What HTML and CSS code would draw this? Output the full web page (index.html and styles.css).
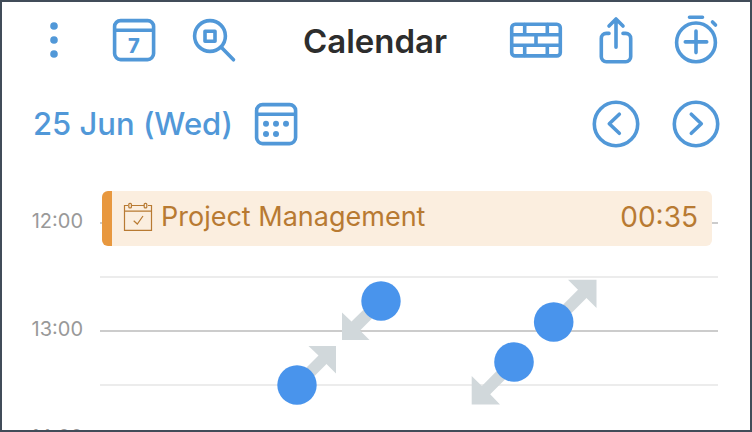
FILE: index.html
```html
<!doctype html>
<html lang="en">
  <head>
    <meta charset="UTF-8" />
    <meta name="viewport" content="width=device-width, initial-scale=1.0" />
    <title>Calendar</title>
    <link rel="stylesheet" href="styles.css">
  </head>
  <body>
    <div class="wrapper">
      <header class="toolbar">
        <div class="toolbar_group">
          <button class="icon_button" aria-label="Menu">
            <svg viewBox="0 0 56 56" class="icon">
              <g class="icon_fill">
                <circle cx="28" cy="13" r="3.8" />
                <circle cx="28" cy="27" r="3.8" />
                <circle cx="28" cy="41" r="3.8" />
              </g>
            </svg>
          </button>
          <button class="icon_button" aria-label="Week view">
            <svg viewBox="0 0 56 56" class="icon">
              <rect x="8.6" y="7.6" width="39" height="39" rx="6" />
              <path d="M9 17.2H47" />
              <text x="28" y="39.5" class="icon_text">7</text>
            </svg>
          </button>
          <button class="icon_button" aria-label="Zoom">
            <svg viewBox="0 0 56 56" class="icon">
              <circle cx="24" cy="23" r="15.4" />
              <rect x="19" y="18.2" width="10" height="10" />
              <path d="M35.5 34.5L47.5 46.8" />
            </svg>
          </button>
        </div>
        <h1>Calendar</h1>
        <div class="toolbar_group toolbar_group_right">
          <button class="icon_button" aria-label="Blocks">
            <svg viewBox="0 0 56 56" class="icon">
              <rect x="3.7" y="11.3" width="48.6" height="31.6" rx="3.5" />
              <path d="M4 21.7H52M4 32.2H52M16.7 11.5V21.7M39.3 11.5V21.7M28 21.7V32.2M16.7 32.2V42.5M39.3 32.2V42.5" />
            </svg>
          </button>
          <button class="icon_button" aria-label="Share">
            <svg viewBox="0 0 56 56" class="icon">
              <path d="M28 6V34.3M21 13L28 6L35 13" />
              <path d="M21 20.4H18.3a5 5 0 0 0-5 5V43.7a5 5 0 0 0 5 5H37.7a5 5 0 0 0 5-5V25.4a5 5 0 0 0-5-5H35" />
            </svg>
          </button>
          <button class="icon_button" aria-label="Add timer">
            <svg viewBox="0 0 56 56" class="icon">
              <circle cx="28" cy="29.4" r="19.4" />
              <path d="M17.3 28.9H38.7M28 18V39.6M21.5 4.3H34.5M44.5 9L47.5 12" />
            </svg>
          </button>
        </div>
      </header>

      <div class="date_bar">
        <h2>25 Jun (Wed)</h2>
        <button class="icon_button" aria-label="Pick a date">
          <svg viewBox="0 0 56 56" class="icon">
            <rect x="8.6" y="8.6" width="39" height="39" rx="6" />
            <path d="M9 18.2H47" />
            <g class="icon_fill">
              <circle cx="18" cy="27.7" r="3" />
              <circle cx="28" cy="27.7" r="3" />
              <circle cx="38" cy="27.7" r="3" />
              <circle cx="18" cy="38" r="3" />
              <circle cx="28" cy="38" r="3" />
            </g>
          </svg>
        </button>
        <div class="date_nav">
          <button class="icon_button" aria-label="Previous day">
            <svg viewBox="0 0 56 56" class="icon">
              <circle cx="28" cy="28" r="21.7" />
              <path d="M31.3 18.2L21.3 27.8L31.3 37.3" />
            </svg>
          </button>
          <button class="icon_button" aria-label="Next day">
            <svg viewBox="0 0 56 56" class="icon">
              <circle cx="28" cy="28" r="21.7" />
              <path d="M23.3 18.2L33.3 27.8L23.3 37.3" />
            </svg>
          </button>
        </div>
      </div>

      <main class="timeline">
        <div class="hour">
          <span class="hour_label">12:00</span>
          <div class="hour_slots">
            <div class="slot"></div>
            <div class="slot slot_half"></div>
          </div>
        </div>
        <div class="hour">
          <span class="hour_label">13:00</span>
          <div class="hour_slots">
            <div class="slot"></div>
            <div class="slot slot_half"></div>
          </div>
        </div>
        <div class="hour">
          <span class="hour_label">14:00</span>
          <div class="hour_slots">
            <div class="slot"></div>
            <div class="slot slot_half"></div>
          </div>
        </div>

        <div class="event">
          <svg viewBox="0 0 30 30" class="event_icon">
            <path d="M5 3.5H1.5V28.3H28.5V3.5H25M9 3.5H21M1.5 9.2H28.5" />
            <rect x="5.8" y="1.3" width="2.6" height="4.6" rx="1" />
            <rect x="21.2" y="1.3" width="2.6" height="4.6" rx="1" />
            <path d="M10.7 18.8L14.3 22L20 14" />
          </svg>
          <span class="event_title">Project Management</span>
          <span class="event_time">00:35</span>
        </div>

        <!-- zoom gestures -->
        <svg viewBox="277 280 126 126" class="gesture gesture_pinch">
          <path class="gesture_arrow" d="M342 312.5V340H369.5L360 330.5L381 309.5L372.5 301L351.5 321.5Z" />
          <path class="gesture_arrow" d="M336 373.5V346H308.5L318.5 355.5L297 377L305.5 385L326.5 364Z" />
          <circle class="gesture_finger" cx="381" cy="301" r="19.7" />
          <circle class="gesture_finger" cx="297" cy="385" r="19.7" />
        </svg>
        <svg viewBox="471 278 128 128" class="gesture gesture_spread">
          <path class="gesture_arrow" d="M596.5 308V279.7H568L578 289.7L550 317.7L558.5 326L586.5 298Z" />
          <path class="gesture_arrow" d="M471.7 376V404.5H500L490.2 394.2L518 366.4L509.5 358L481.9 385.9Z" />
          <circle class="gesture_finger" cx="553.7" cy="322" r="19.8" />
          <circle class="gesture_finger" cx="514" cy="362" r="19.8" />
        </svg>
      </main>
    </div>
  </body>
</html>
```

FILE: styles.css
```css
:root {
  --color-blue: #5198d8;
  --color-finger: #4994ec;
  --color-arrow: #d1d8db;
  --color-frame: #414c59;
  --color-title: #2d2d2d;
  --color-label: #999999;
  --color-event: #b87a32;
  --color-event-bar: #e8983f;
  --color-event-bg: #fbeedf;

  --icon-size: 56px;
  --slot-height: 54px;
}

* {
  box-sizing: border-box;
}
html {
  font-family: "Inter", "Liberation Sans", sans-serif;
}
body {
  margin: 0;
  background-color: #ffffff;
}
h1,
h2 {
  margin: 0;
}

.wrapper {
  height: 100vh;
  overflow: hidden;
  border: 2px solid var(--color-frame);
}

/* TOOLBAR */
.toolbar {
  display: grid;
  grid-template-columns: 1fr auto 1fr;
  align-items: center;
  padding: 11px 26px 0 24px;
}
.toolbar_group {
  display: flex;
  gap: 24px;
}
.toolbar_group_right {
  justify-content: flex-end;
}
.toolbar h1 {
  font-size: 33px;
  font-weight: 600;
  line-height: 56px;
  color: var(--color-title);
}

.icon_button {
  flex: none;
  width: var(--icon-size);
  height: var(--icon-size);
  padding: 0;
  border: none;
  background: none;
  color: var(--color-blue);
  cursor: pointer;
}
.icon {
  display: block;
  width: 100%;
  height: 100%;
  fill: none;
  stroke: currentColor;
  stroke-width: 3.6;
  stroke-linecap: round;
  stroke-linejoin: round;
}
.icon_fill,
.icon_text {
  fill: currentColor;
  stroke: none;
}
.icon_text {
  font-family: "Inter", sans-serif;
  font-size: 20px;
  font-weight: 800;
  text-anchor: middle;
}

/* DATE */
.date_bar {
  display: flex;
  align-items: center;
  gap: 15px;
  padding: 27px 26px 18px 31px;
}
.date_bar h2 {
  font-size: 31px;
  font-weight: 500;
  line-height: 56px;
  white-space: nowrap;
  color: var(--color-blue);
}
.date_nav {
  display: flex;
  gap: 24px;
  margin-left: auto;
}

/* TIMELINE */
.timeline {
  position: relative;
}
.hour {
  display: flex;
  align-items: center;
  padding-right: 32px;
}
.hour_label {
  width: 98px;
  padding: 0 17px 6px 0;
  font-size: 20px;
  line-height: 24px;
  text-align: right;
  color: var(--color-label);
}
.hour_slots {
  flex: 1;
}
.slot {
  height: var(--slot-height);
  border-bottom: 2px solid #cccccc;
}
.slot_half {
  border-bottom-color: #ececec;
}

.event {
  position: absolute;
  top: 21px;
  left: 100px;
  right: 38px;
  display: flex;
  align-items: center;
  gap: 8px;
  height: 55px;
  padding: 0 14px 3px 11px;
  border-left: 10px solid var(--color-event-bar);
  border-radius: 6px;
  background-color: var(--color-event-bg);
  line-height: 36px;
  color: var(--color-event);
}
.event_icon {
  flex: none;
  width: 30px;
  height: 30px;
  fill: none;
  stroke: currentColor;
  stroke-width: 1.2;
}
.event_title {
  font-size: 27px;
}
.event_time {
  margin-left: auto;
  font-size: 28px;
}

.gesture {
  position: absolute;
}
.gesture_pinch {
  top: 110px;
  left: 275px;
  width: 126px;
  height: 126px;
}
.gesture_spread {
  top: 108px;
  left: 469px;
  width: 128px;
  height: 128px;
}
.gesture_arrow {
  fill: var(--color-arrow);
}
.gesture_finger {
  fill: var(--color-finger);
}
```
